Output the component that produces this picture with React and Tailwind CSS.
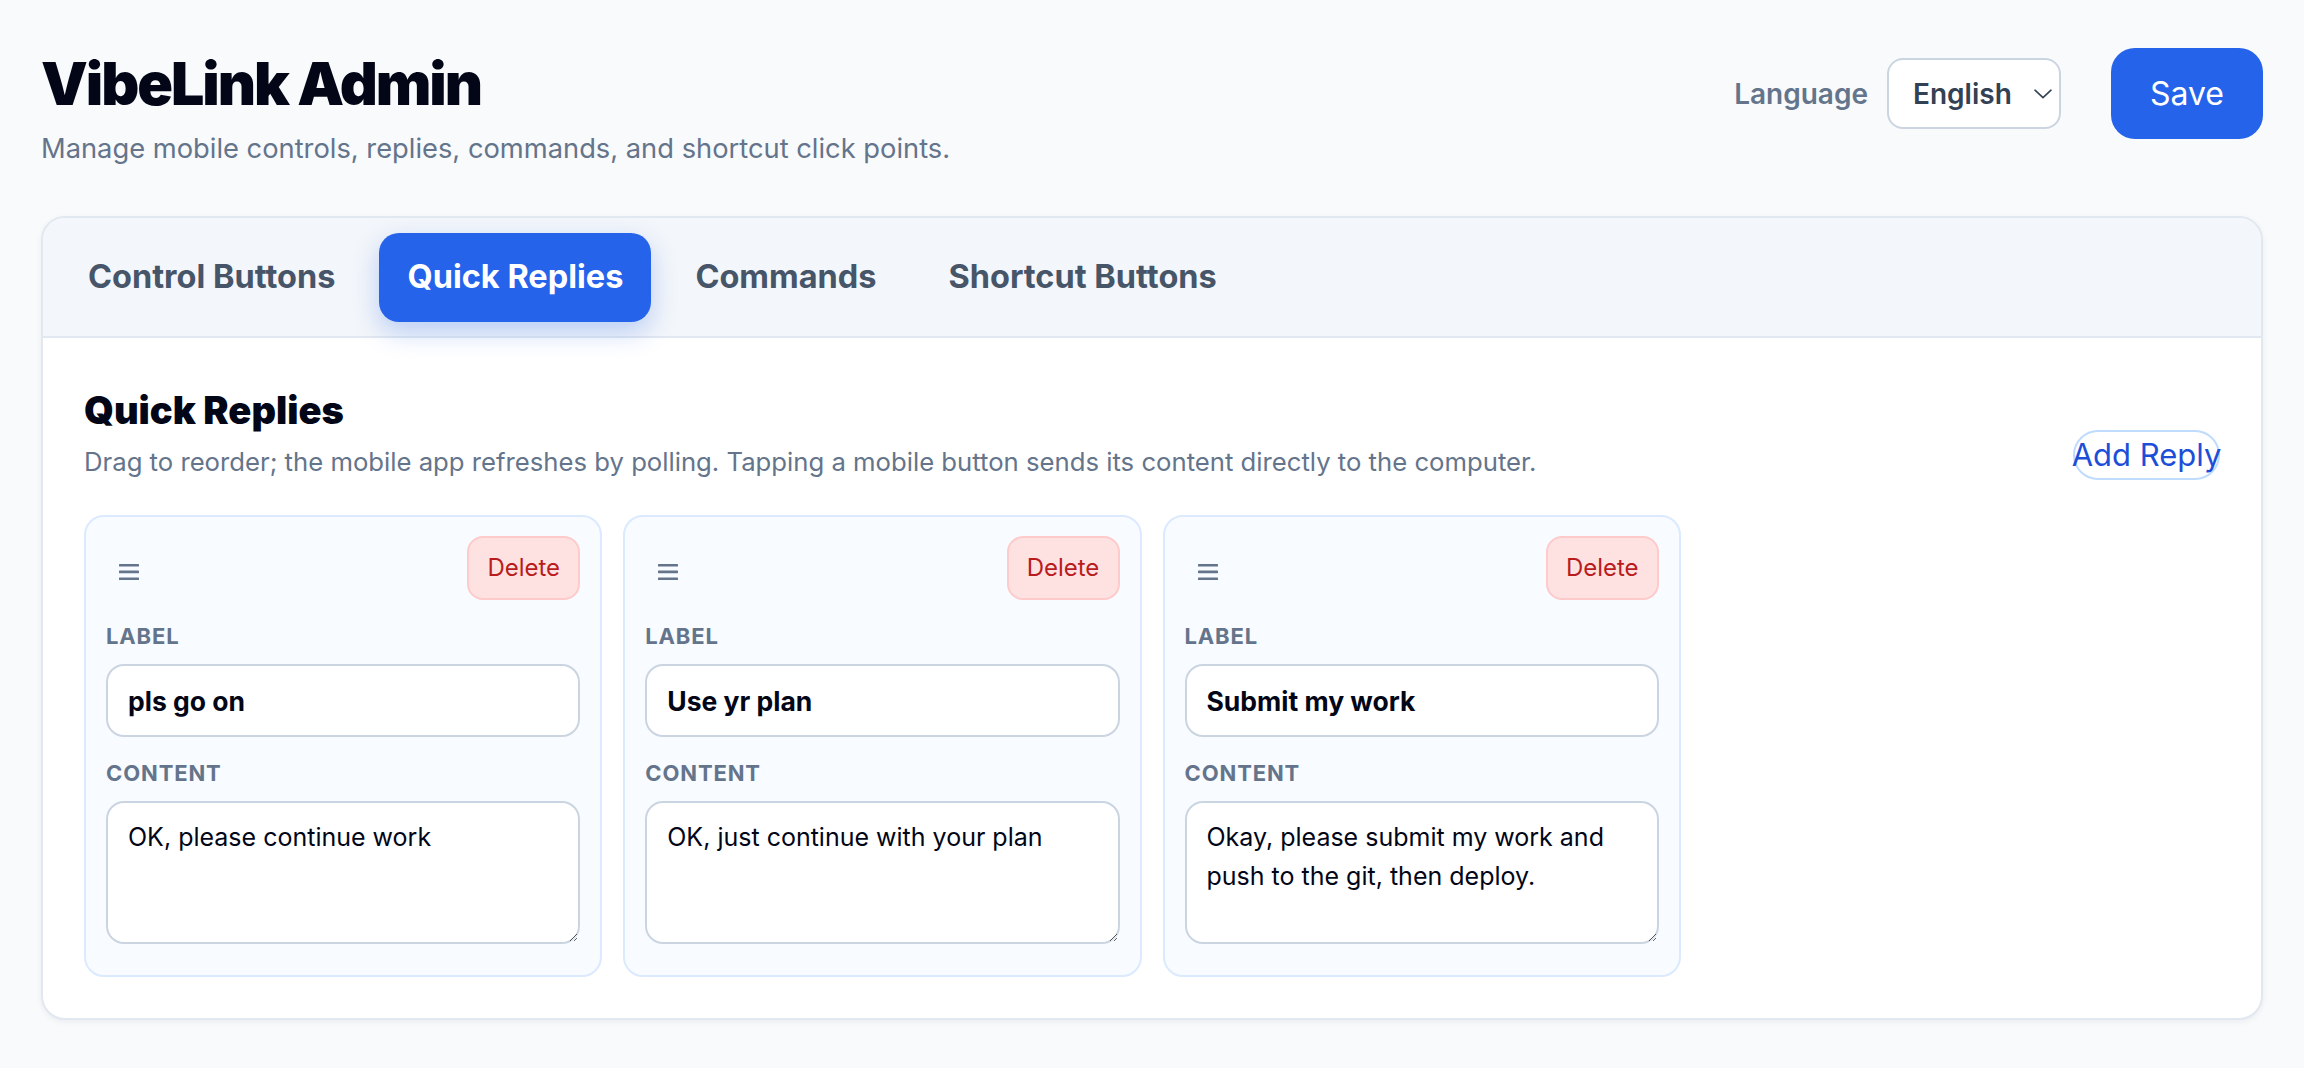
import { useState } from "react";

const tabs = ["Control Buttons", "Quick Replies", "Commands", "Shortcut Buttons"];

const initialReplies = [
  { id: 1, label: "pls go on", content: "OK, please continue work" },
  { id: 2, label: "Use yr plan", content: "OK, just continue with your plan" },
  {
    id: 3,
    label: "Submit my work",
    content: "Okay, please submit my work and push to the git, then deploy.",
  },
];

function HandleIcon() {
  return (
    <svg width="20" height="17" viewBox="0 0 20 17" fill="#64748b">
      <rect x="0" y="0" width="20" height="2.6" rx="0.6" />
      <rect x="0" y="6.6" width="20" height="2.6" rx="0.6" />
      <rect x="0" y="13.4" width="20" height="2.6" rx="0.6" />
    </svg>
  );
}

function ChevronDown() {
  return (
    <svg width="18" height="10" viewBox="0 0 18 10" fill="none">
      <path d="M1 1.2L9 8.6L17 1.2" stroke="#334155" strokeWidth="1.6" strokeLinecap="round" strokeLinejoin="round" />
    </svg>
  );
}

function ReplyCard({ reply, onChange, onDelete }) {
  return (
    <div className="flex flex-col gap-[21px] rounded-[20px] border-2 border-[#dbeafe] bg-[#f8fbff] px-5 pt-[19px] pb-[31px]">
      <div className="flex items-center justify-between">
        <button className="ml-[13px] mt-2 cursor-grab" title="Drag">
          <HandleIcon />
        </button>
        <button
          onClick={onDelete}
          className="h-[64px] w-[113px] rounded-[16px] border-2 border-[#fecaca] bg-[#fee2e2] text-[24px] text-[#b91c1c]"
        >
          Delete
        </button>
      </div>

      <div className="flex flex-col gap-[13px]">
        <label className="text-[22px] leading-[30px] font-bold uppercase tracking-[0.04em] text-[#64748b]">Label</label>
        <input
          value={reply.label}
          onChange={(e) => onChange({ ...reply, label: e.target.value })}
          className="h-[73px] w-full rounded-[18px] border-2 border-[#cbd5e1] bg-white px-5 text-[26.5px] font-bold text-[#020617] outline-none"
        />
      </div>

      <div className="flex flex-col gap-[13px]">
        <label className="text-[22px] leading-[30px] font-bold uppercase tracking-[0.04em] text-[#64748b]">Content</label>
        <textarea
          value={reply.content}
          onChange={(e) => onChange({ ...reply, content: e.target.value })}
          className="block h-[143px] w-full rounded-[18px] border-2 border-[#cbd5e1] bg-white px-5 pt-[15px] text-[25px] leading-[39px] text-[#020617] outline-none"
        />
      </div>
    </div>
  );
}

export default function App() {
  const [activeTab, setActiveTab] = useState("Quick Replies");
  const [replies, setReplies] = useState(initialReplies);

  const updateReply = (next) => {
    setReplies((list) => list.map((r) => (r.id === next.id ? next : r)));
  };

  const addReply = () => {
    setReplies((list) => [...list, { id: Date.now(), label: "", content: "" }]);
  };

  return (
    <div className="min-h-screen bg-[#f8fafc] px-[41px] pt-[48px] pb-[48px] font-['Inter',sans-serif]">
      <header className="flex items-start justify-between">
        <div>
          <h1 className="text-[59px] leading-[72px] font-black tracking-[-0.035em] text-[#020617]">VibeLink Admin</h1>
          <p className="mt-[9px] text-[27.3px] leading-[39px] text-[#64748b]">
            Manage mobile controls, replies, commands, and shortcut click points.
          </p>
        </div>
        <div className="flex items-center">
          <div className="flex items-center gap-[19px]">
            <span className="text-[28px] font-semibold text-[#64748b]">Language</span>
            <div className="flex h-[71px] w-[174px] items-center justify-between rounded-[16px] border-2 border-[#cbd5e1] bg-white pl-[24px] pr-[7px]">
              <span className="text-[28px] font-semibold text-[#334155]">English</span>
              <ChevronDown />
            </div>
          </div>
          <button className="ml-[50px] h-[91px] w-[152px] rounded-[24px] bg-[#2563eb] text-[32px] text-white">
            Save
          </button>
        </div>
      </header>

      <main className="mt-[48px] overflow-hidden rounded-[24px] border-2 border-[#e2e8f0] bg-white shadow-[0_2px_6px_rgba(15,23,42,0.06)]">
        <nav className="flex gap-4 border-b-2 border-[#e2e8f0] bg-[#f3f6fa] px-[17px] pt-[15px] pb-[14px]">
          {tabs.map((tab) => (
            <button
              key={tab}
              onClick={() => setActiveTab(tab)}
              className={
                tab === activeTab
                  ? "h-[89px] rounded-[20px] bg-[#2563eb] px-[28px] text-[32.5px] font-bold text-white shadow-[0_10px_26px_rgba(37,99,235,0.28)]"
                  : "h-[89px] rounded-[20px] px-[28px] text-[32.5px] font-bold text-[#475569]"
              }
            >
              {tab}
            </button>
          ))}
        </nav>

        <section className="px-[41px] pt-[50px] pb-[41px]">
          <div className="flex items-end justify-between">
            <div>
              <h2 className="text-[38px] leading-[44px] font-black text-[#020617]">Quick Replies</h2>
              <p className="mt-[12px] text-[25.7px] leading-[36px] text-[#64748b]">
                Drag to reorder; the mobile app refreshes by polling. Tapping a mobile button sends its content directly to the computer.
              </p>
            </div>
            <button
              onClick={addReply}
              className="flex h-[50px] w-[147px] items-center justify-center whitespace-nowrap rounded-full border-2 border-[#bfdbfe] text-[31px] text-[#1d4ed8]"
            >
              Add Reply
            </button>
          </div>

          <div className="mt-[35px] grid grid-cols-4 gap-[21px]">
            {replies.map((reply) => (
              <ReplyCard
                key={reply.id}
                reply={reply}
                onChange={updateReply}
                onDelete={() => setReplies((list) => list.filter((r) => r.id !== reply.id))}
              />
            ))}
          </div>
        </section>
      </main>
    </div>
  );
}
